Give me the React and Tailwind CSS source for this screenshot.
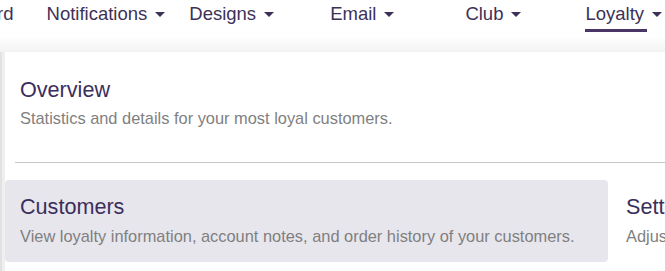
const navItems = [
  { label: 'Dashboard', ml: '-ml-[77px]', caret: false },
  { label: 'Notifications', ml: 'ml-[33px]', caret: true },
  { label: 'Designs', ml: 'ml-[24px]', caret: true },
  { label: 'Email', ml: 'ml-[56px]', caret: true },
  { label: 'Club', ml: 'ml-[71px]', caret: true },
  { label: 'Loyalty', ml: 'ml-[64px]', caret: true, active: true },
];

function Caret() {
  return <span className="ml-[8px] inline-block w-0 h-0 border-x-[5px] border-t-[5px] border-x-transparent border-t-[#3d3158]" />;
}

function MenuItem({ title, text, active }) {
  return (
    <div className={'rounded-[4px] pl-[15px] pt-[14px] pb-[16px] ' + (active ? 'bg-[#e8e6ed]' : '')}>
      <div className="text-[21.6px] leading-[26px] text-[#3b2e5c] whitespace-nowrap">{title}</div>
      <div className="mt-[6px] text-[16.4px] leading-[20px] text-[#7f7f7f] whitespace-nowrap">{text}</div>
    </div>
  );
}

export default function App() {
  return (
    <div className="w-[665px] h-[271px] overflow-hidden bg-[#f1f1f1] font-['Liberation_Sans',Arial,sans-serif]">
      {/* Top nav */}
      <nav className="h-[36px] bg-white flex items-start pt-[3px] whitespace-nowrap">
        {navItems.map((item) => (
          <div key={item.label} className={'flex flex-col shrink-0 ' + item.ml}>
            <div className="flex items-center text-[18.5px] leading-[22px] text-[#3d3158]">
              <span>{item.label}</span>
              {item.caret && <Caret />}
            </div>
            {item.active && <div className="mt-[4px] w-[62px] h-[3px] bg-[#4a3665]" />}
          </div>
        ))}
      </nav>
      <div className="h-[16px] bg-gradient-to-b from-white to-[#f3f3f3]" />

      {/* Dropdown panel */}
      <div className="flex">
        <div className="w-[5px] shrink-0 border-l-[2px] border-[#e2e2e2] bg-[#efefef]" />
        <div className="flex-1 bg-white pt-[25px] h-[230px]">
          <div className="pl-[15px] pb-[34px]">
            <div className="text-[21.6px] leading-[26px] text-[#3b2e5c]">Overview</div>
            <div className="mt-[5px] text-[16.4px] leading-[20px] text-[#7f7f7f]">
              Statistics and details for your most loyal customers.
            </div>
          </div>
          <div className="ml-[10px] h-px bg-[#c6c6c6]" />
          <div className="mt-[17px] flex gap-[3px]">
            <div className="w-[603px] shrink-0">
              <MenuItem
                active
                title="Customers"
                text="View loyalty information, account notes, and order history of your customers."
              />
            </div>
            <div className="shrink-0">
              <MenuItem title="Settings" text="Adjust loyalty program settings." />
            </div>
          </div>
        </div>
      </div>
    </div>
  );
}
